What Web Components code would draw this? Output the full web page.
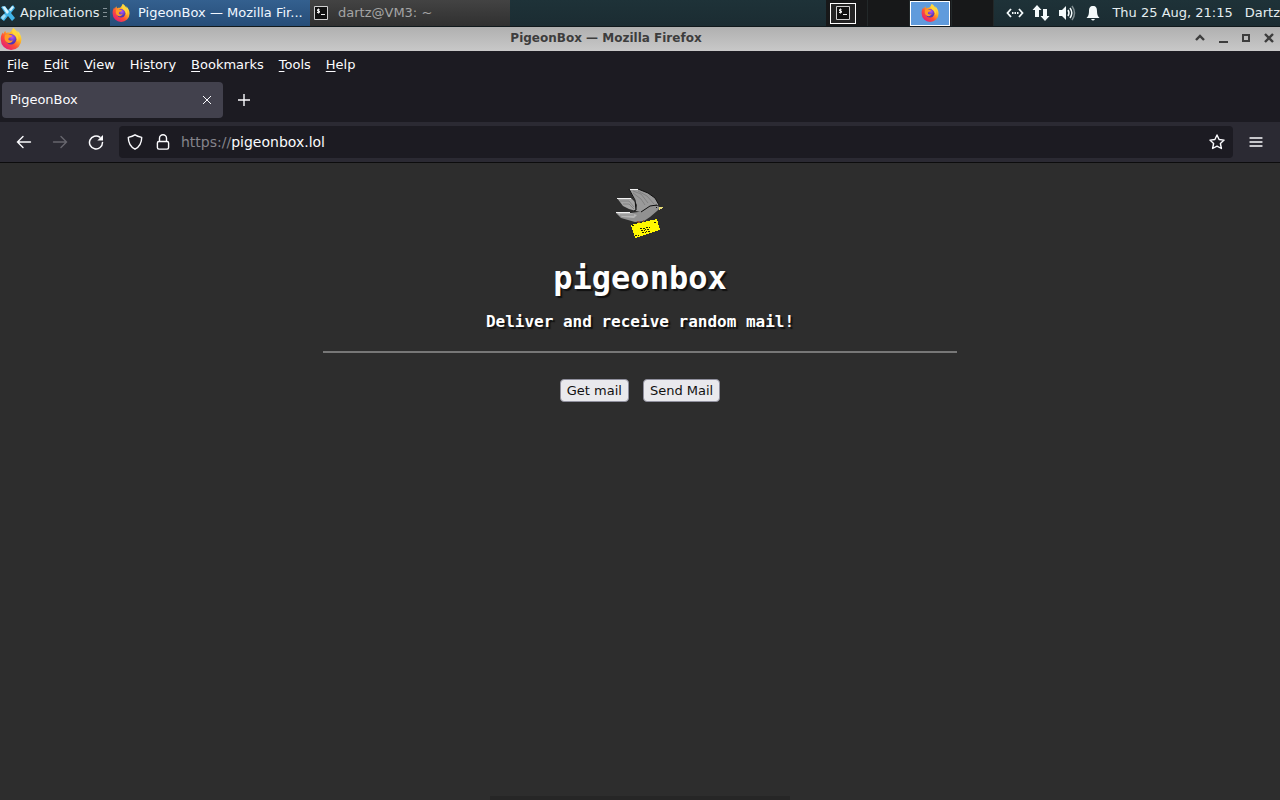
<!DOCTYPE html>
<html lang="en">
<head>
<meta charset="utf-8">
<title>PigeonBox</title>
<style>
  html, body { height: 100%; margin: 0; }
  body { background: #2d2d2d; font: 13px/20px "DejaVu Sans", sans-serif; color: #fbfbfe; overflow: hidden; }
</style>
</head>
<body>
<desktop-screen>
  <desktop-panel></desktop-panel>
  <window-title>PigeonBox — Mozilla Firefox</window-title>
  <menu-bar></menu-bar>
  <tab-strip>PigeonBox</tab-strip>
  <nav-bar></nav-bar>
  <pigeon-page></pigeon-page>
  <hidden-dock></hidden-dock>
</desktop-screen>

<script>
const stroke = 'fill="none" stroke="currentColor"';
const icons = {
  firefox: [20, `<defs>
      <linearGradient id="f" x1=".85" y1=".1" x2=".2" y2=".9"><stop offset="0" stop-color="#fff14a"/><stop offset=".35" stop-color="#ffae22"/><stop offset=".65" stop-color="#ff5037"/><stop offset="1" stop-color="#e62270"/></linearGradient>
      <radialGradient id="g" cx=".6" cy=".3"><stop offset="0" stop-color="#b456f5"/><stop offset="1" stop-color="#5135b5"/></radialGradient></defs>
      <path fill="url(#f)" d="M12 0c2 1.3 3.400 3 4 4.700 0-.8 0-1.500-.2-2.200C18 4.500 19.500 7.400 19.500 10.500A9.400 9.400 0 0 1 .7 10.600C.5 8 1.300 5.600 2.500 4l.7 1.500C3.400 4.200 4 3.200 4.900 2.400c.1 1 .5 1.700 1 2.200 1-.4 2-.5 3-.3 1-.9 2-2.500 3.100-4.300z"/>
      <circle cx="10" cy="10.300" r="4.800" fill="url(#g)"/>
      <path fill="#ff9a27" d="M4.700 6.200c1.500-.9 3-.8 4.300.1 1 .1 1.800.3 2.200.9-.6 1-1.700 1.200-2.500 1.500-.8.400-.9 1-1.100 1.600.5 1.600 2.500 1.500 4.200.9-.7 2-3 3-5.300 1.900C4.300 11.900 3.500 9 4.700 6.200z"/>
      <path fill="#ffd53d" d="M12 0c2.300 1.600 3.400 3.600 3.500 5.600 1.400 1.900 1.700 4.600.6 7 .1-3.400-1.800-5-3.600-6.600C10.600 4.300 10.900 2 12 0z"/>`],
  xfce: [16, `<path fill="#41b4e8" d="M1 2l4-1 3 4 5-5 2 3-4 5 4 5-3 3-4-5-4 5-4-3 5-5z"/><path fill="#d5f3ff" d="M2 1.500h3l4 5.500-2 2zM12 1l2 1-3 4-2-1z"/><path fill="#a3dcf4" d="M1 12l3-3 2 2-3 4z"/>`],
  terminal: [14, `<path fill="#111" stroke="#d0d0d0" d="M.5.5h13v13H.5z"/><path fill="none" stroke="#eee" d="M5.500 3.500h-2v1.500h2v1.500h-2.500M4.500 2.500v5M7 8.500h4"/>`],
  code: [18, `<path ${stroke} stroke-width="1.800" d="M5 5L1.500 9 5 13M13 5l3.500 4-3.500 4"/><path fill="currentColor" d="M6 8h1.500v2H6zM8.500 8H10v2H8.500zM11 8h1.500v2H11z"/>`],
  network: [18, `<path fill="currentColor" d="M5 1l4.500 5H7v7H3V6H.5zM13 17l4.500-5H15V5h-4v7H8.500z"/>`],
  volume: [18, `<path fill="currentColor" d="M1 6h3l4-4v14l-4-4H1z"/><path ${stroke} stroke-width="1.500" d="M10 6q2 3 0 6M12 4q3.600 5 0 10"/><path ${stroke} opacity=".45" stroke-width="1.500" d="M14 2q5 7 0 14"/>`],
  bell: [18, `<path fill="currentColor" d="M9 2c3 0 4 2 4 5 0 3 .5 5 2.500 7h-13C4.500 12 5 10 5 7c0-3 1-5 4-5zM7 15h4q-2 3-4 0z"/>`],
  shade: [12, `<path ${stroke} stroke-width="2.400" d="M2 8l4-4 4 4"/>`],
  minimise: [12, `<path fill="currentColor" d="M2 9h9v2H2z"/>`],
  maximise: [12, `<path ${stroke} stroke-width="2" d="M3 3h6v6H3z"/>`],
  shut: [12, `<path ${stroke} stroke-width="2.400" d="M2 2l8 8m0-8l-8 8"/>`],
  close: [12, `<path ${stroke} d="M2 2l8 8m0-8l-8 8"/>`],
  plus: [12, `<path ${stroke} stroke-width="1.400" d="M6 0v12M0 6h12"/>`],
  back: [16, `<path ${stroke} stroke-width="1.400" stroke-linecap="round" d="M14.500 8H1.500M7 2.500L1.500 8 7 13.500"/>`],
  forward: [16, `<path ${stroke} stroke-width="1.400" stroke-linecap="round" d="M1.500 8h13M9 2.500L14.500 8 9 13.500"/>`],
  reload: [16, `<path ${stroke} stroke-width="1.500" stroke-linecap="round" d="M11.800 3.200A6.500 6.500 0 1 0 14.500 8.500"/><path fill="currentColor" d="M15 1v5.500H9.300z"/>`],
  shield: [16, `<path ${stroke} stroke-width="1.400" stroke-linejoin="round" d="M8 .8c2 1.300 4.300 2 6.700 2.600 0 5.400-1.700 9-6.700 11.800C3 12.400 1.300 8.800 1.300 3.400 3.700 2.800 6 2.100 8 .8z"/>`],
  lock: [16, `<rect ${stroke} stroke-width="1.400" x="2.400" y="7.500" width="11.200" height="7.600" rx="1.500"/><path ${stroke} stroke-width="1.400" d="M4.500 7.500V4.300a3.500 3.500 0 0 1 7 0v3.200"/>`],
  star: [16, `<path ${stroke} stroke-width="1.400" stroke-linejoin="round" d="M8 1l2.100 4.500 5 .6-3.700 3.400 1 5L8 12.100l-4.400 2.400 1-5L.9 6.100l5-.6z"/>`],
  burger: [14, `<path ${stroke} stroke-width="1.300" stroke-linecap="round" d="M1 3h12M1 7h12M1 11h12"/>`],
  pigeon: [50, `<path fill="#9a9a9a" d="M14 1h9l10 4 7 5 4 7-8 1-10 6-5-1 1-6z"/>
      <path fill="#a4a4a4" d="M2 10h14l4 4 1 9-7-2-6-3z"/>
      <path fill="#919191" d="M1 25h15l7-1 3-1 9-5 8 0 2 2-3 3-7 6-6 4-9 1-14-4z"/>
      <path fill="#b5b5b5" d="M2 25h14l6 2-3 3-12-1z"/>
      <path fill="none" stroke="#7b7b7b" stroke-width=".8" d="M18 3l8 3 7 9M18 5l8 6 4 6M23 3l9 5 7 8M5 13h9l5 6M8 16h6l5 5M5 27h14"/>
      <path fill="none" stroke="#111" d="M14 1l6 11 1 10-2 1M26 24l9-6 7-1M23 1l10 4 7 5 4 7"/>
      <g shape-rendering="crispEdges">
      <path fill="#f2f2f2" d="M15 1h8v1h-8zM2 10h14v1H2zM1 24h14v1H1z"/>
      <path fill="#eadf78" d="M44 19h4v1l-4 2z"/><path fill="#111" d="M41 19h1v1h-1z"/>
      <path fill="none" stroke="#9b532e" d="M22 33l3 2M29 32l-1 3"/>
      <path fill="#fff800" d="M16 37l26-6 3 11-25 8z"/>
      <path fill="none" stroke="#202000" stroke-dasharray="2 1" d="M25 41l10-2M26 43l9-2M27 45l8-2M17 38l3-1M39 34l3 2M20 48l4-1"/></g>`]
};

const reset = `<style>
  :host, * { box-sizing: border-box; }
  button, input { font: inherit; color: inherit; border: 0; padding: 0; margin: 0; background: none; }
  button { display: flex; align-items: center; justify-content: center; }
</style>`;

function define(name, markup) {
  const template = document.createElement('template');
  template.innerHTML = reset + markup;
  customElements.define(name, class extends HTMLElement {
    constructor() {
      super();
      this.attachShadow({ mode: 'open' }).append(template.content.cloneNode(true));
    }
  });
}

customElements.define('ui-icon', class extends HTMLElement {
  connectedCallback() {
    if (this.shadowRoot) return;
    const [box, art] = icons[this.getAttribute('name')];
    const size = this.getAttribute('size') || box;
    this.attachShadow({ mode: 'open' }).innerHTML = `
      <style>:host { display: block; flex: none; } svg { display: block; }</style>
      <svg width="${size}" height="${size}" viewBox="0 0 ${box} ${box}" aria-hidden="true">${art}</svg>`;
  }
});

define('desktop-screen', `
  <style>:host { display: flex; flex-direction: column; position: relative; min-height: 100vh; }</style>
  <slot></slot>`);

define('hidden-dock', `
  <style>:host { display: block; position: absolute; left: 50%; bottom: 0; width: 300px; height: 4px; margin-left: -150px; background: #262626; }</style>`);

define('desktop-panel', `
  <style>
    :host { display: flex; align-items: center; height: 27px; background: linear-gradient(#1e3238, #1b2c32); border-bottom: 1px solid #11191c; color: #e4edf0; white-space: nowrap; }
    .apps { width: 110px; height: 26px; gap: 4px; justify-content: flex-start; }
    .grip { width: 4px; height: 10px; background: repeating-linear-gradient(#839095 0 1px, transparent 1px 4px); }
    .task { width: 200px; height: 26px; gap: 8px; padding-left: 2px; justify-content: flex-start; }
    .active { background: linear-gradient(#34608f, #264d78); color: #f1f7ff; }
    .idle { background: linear-gradient(#434343, #303030); color: #a5a5a5; gap: 10px; }
    .idle ui-icon { margin-left: 2px; }
    .spaces { display: grid; grid-template-columns: repeat(4, 42px); height: 26px; margin-left: auto; background: #171819; }
    .spaces button { justify-content: flex-start; border-right: 1px solid #222829; }
    .mini { display: flex; align-items: center; justify-content: center; width: 26px; height: 21px; margin-left: 4px; border: 1px solid #fff; background: #242424; }
    .wide { width: 40px; height: 25px; margin-left: 0; background: #609bdc; }
    .tray { display: flex; align-items: center; gap: 8px; padding: 0 10px 0 12px; color: #f4fafb; }
    .user { margin-left: 12px; }
  </style>
  <button class="apps"><ui-icon name="xfce"></ui-icon>Applications<span class="grip"></span></button>
  <button class="task active"><ui-icon name="firefox" size="18"></ui-icon>PigeonBox — Mozilla Fir...</button>
  <button class="task idle"><ui-icon name="terminal"></ui-icon>dartz@VM3: ~</button>
  <div class="spaces">
    <button aria-label="Workspace 1"><span class="mini"><ui-icon name="terminal"></ui-icon></span></button>
    <button aria-label="Workspace 2"></button>
    <button aria-label="Workspace 3"><span class="mini wide"><ui-icon name="firefox" size="18"></ui-icon></span></button>
    <button aria-label="Workspace 4"></button>
  </div>
  <div class="tray"><ui-icon name="code"></ui-icon><ui-icon name="network"></ui-icon><ui-icon name="volume"></ui-icon><ui-icon name="bell"></ui-icon></div>
  <time datetime="2022-08-25T21:15">Thu 25 Aug, 21:15</time><span class="user">Dartz</span>`);

define('window-title', `
  <style>
    :host { display: flex; align-items: center; height: 24px; background: linear-gradient(#b0b0b0, #c8c8c8); color: #3d3d3d; font-size: 12px; font-weight: bold; }
    .title { flex: 1; text-align: center; padding: 0 4px 2px 0; }
    .buttons { display: flex; gap: 11px; padding: 0 5px 2px 0; }
  </style>
  <ui-icon name="firefox" size="22"></ui-icon>
  <span class="title"><slot></slot></span>
  <div class="buttons">
    <button aria-label="Shade"><ui-icon name="shade"></ui-icon></button>
    <button aria-label="Minimise"><ui-icon name="minimise"></ui-icon></button>
    <button aria-label="Maximise"><ui-icon name="maximise"></ui-icon></button>
    <button aria-label="Close"><ui-icon name="shut"></ui-icon></button>
  </div>`);

define('menu-bar', `
  <style>
    :host { display: flex; gap: 15px; height: 27px; padding-left: 7px; background: #1c1b22; }
    u { text-underline-offset: 2px; }
  </style>
  <button><span><u>F</u>ile</span></button>
  <button><span><u>E</u>dit</span></button>
  <button><span><u>V</u>iew</span></button>
  <button><span>Hi<u>s</u>tory</span></button>
  <button><span><u>B</u>ookmarks</span></button>
  <button><span><u>T</u>ools</span></button>
  <button><span><u>H</u>elp</span></button>`);

define('tab-strip', `
  <style>
    :host { display: flex; align-items: center; gap: 15px; height: 44px; padding-left: 2px; background: #1c1b22; }
    .tab { display: flex; align-items: center; justify-content: space-between; width: 221px; height: 36px; padding: 0 10px 0 8px; border-radius: 4px; background: #42414d; }
  </style>
  <div class="tab"><span><slot></slot></span><button aria-label="Close tab"><ui-icon name="close"></ui-icon></button></div>
  <button aria-label="New tab"><ui-icon name="plus"></ui-icon></button>`);

define('nav-bar', `
  <style>
    :host { display: flex; align-items: center; height: 41px; background: #2b2a33; border-bottom: 1px solid #0c0c0d; }
    .tools { display: flex; gap: 20px; padding: 0 15px 0 16px; }
    button:disabled { color: #67666e; }
    .address { flex: 1; display: flex; align-items: center; height: 32px; padding: 0 8px; border-radius: 4px; background: #1c1b22; font-size: 14px; }
    .address ui-icon + ui-icon { margin-left: 12px; }
    label { margin-left: 10px; color: #85848b; }
    input { flex: 1; min-width: 0; outline: 0; }
    .menu { width: 46px; margin-right: 1px; }
  </style>
  <div class="tools">
    <button aria-label="Back"><ui-icon name="back"></ui-icon></button>
    <button aria-label="Forward" disabled><ui-icon name="forward"></ui-icon></button>
    <button aria-label="Reload"><ui-icon name="reload"></ui-icon></button>
  </div>
  <div class="address">
    <ui-icon name="shield"></ui-icon><ui-icon name="lock"></ui-icon>
    <label for="url">https://</label><input id="url" type="text" value="pigeonbox.lol" spellcheck="false">
    <button aria-label="Bookmark this page"><ui-icon name="star"></ui-icon></button>
  </div>
  <button class="menu" aria-label="Application menu"><ui-icon name="burger"></ui-icon></button>`);

define('pigeon-page', `
  <style>
    :host { display: flex; flex-direction: column; align-items: center; flex: 1; padding: 25px 8px 0; background: #2d2d2d; }
    h1, p { margin: 0; font-family: "DejaVu Sans Mono", monospace; font-weight: bold; color: #fff; text-shadow: 2px 2px 1px #111; }
    h1 { margin-top: 20px; font-size: 32px; line-height: 40px; }
    p { margin-top: 14px; font-size: 16px; line-height: 20px; }
    hr { box-sizing: content-box; width: 50%; height: 0; margin: 19px 0 26px; border: 1px solid #777; }
    .actions { display: flex; gap: 14px; }
    .actions button { height: 23px; padding: 0 6px; border: 1px solid #8f8f9d; border-radius: 4px; background: #e9e9ed; color: #111; }
    .actions button:hover { background: #d0d0d7; }
  </style>
  <ui-icon name="pigeon"></ui-icon>
  <h1>pigeonbox</h1>
  <p>Deliver and receive random mail!</p>
  <hr>
  <div class="actions"><button>Get mail</button><button>Send Mail</button></div>`);
</script>
</body>
</html>
